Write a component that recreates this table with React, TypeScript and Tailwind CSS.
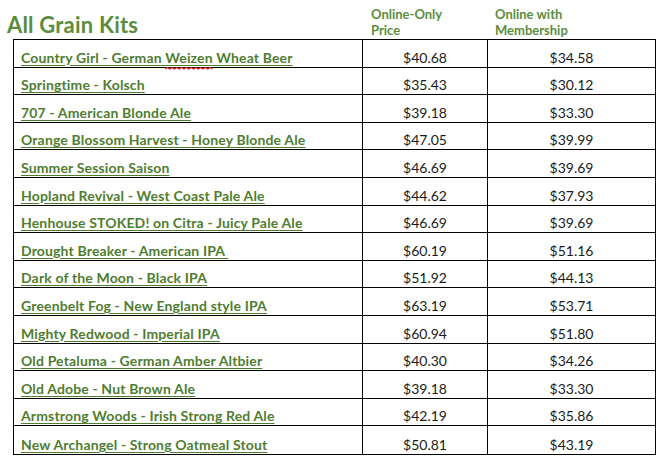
import React from "react";

const rows: [string, string, string][] = [
  ["Country Girl - German Weizen Wheat Beer", "$40.68", "$34.58"],
  ["Springtime - Kolsch", "$35.43", "$30.12"],
  ["707 - American Blonde Ale", "$39.18", "$33.30"],
  ["Orange Blossom Harvest - Honey Blonde Ale", "$47.05", "$39.99"],
  ["Summer Session Saison", "$46.69", "$39.69"],
  ["Hopland Revival - West Coast Pale Ale", "$44.62", "$37.93"],
  ["Henhouse STOKED! on Citra - Juicy Pale Ale", "$46.69", "$39.69"],
  ["Drought Breaker - American IPA\u00a0", "$60.19", "$51.16"],
  ["Dark of the Moon - Black IPA", "$51.92", "$44.13"],
  ["Greenbelt Fog - New England style IPA", "$63.19", "$53.71"],
  ["Mighty Redwood - Imperial IPA", "$60.94", "$51.80"],
  ["Old Petaluma - German Amber Altbier", "$40.30", "$34.26"],
  ["Old Adobe - Nut Brown Ale", "$39.18", "$33.30"],
  ["Armstrong Woods - Irish Strong Red Ale", "$42.19", "$35.86"],
  ["New Archangel - Strong Oatmeal Stout", "$50.81", "$43.19"],
];

function Name({ text }: { text: string }) {
  if (text.startsWith("Country Girl")) {
    return (
      <span className="underline decoration-[#4f7d30] underline-offset-2">
        Country Girl - German{" "}
        <span className="relative">
          Weizen
          <svg className="absolute left-0 -bottom-[4px]" width="100%" height="3" preserveAspectRatio="none" viewBox="0 0 40 3">
            <path d="M0 2 L2 0.5 L4 2 L6 0.5 L8 2 L10 0.5 L12 2 L14 0.5 L16 2 L18 0.5 L20 2 L22 0.5 L24 2 L26 0.5 L28 2 L30 0.5 L32 2 L34 0.5 L36 2 L38 0.5 L40 2" stroke="#e02020" strokeWidth="1" fill="none" />
          </svg>
        </span>{" "}
        Wheat Beer
      </span>
    );
  }
  return <span className="underline decoration-[#4f7d30] underline-offset-2 whitespace-pre">{text}</span>;
}

export default function App() {
  return (
    <div className="w-[662px] h-[464px] bg-white overflow-hidden" style={{ fontFamily: "Lato, 'Open Sans', sans-serif" }}>
      <div className="flex h-[39px]">
        <div className="w-[362px] pl-[7px] pt-[12px] text-[22px] leading-[26px] font-bold text-[#5b8d3c] tracking-[0.2px]">All Grain Kits</div>
        <div className="w-[125px] pl-[9px] pt-[6px] text-[13px] leading-[16px] font-bold text-[#5b8d3c]">
          Online-Only
          <br />
          Price
        </div>
        <div className="pl-[8px] pt-[6px] text-[13px] leading-[16px] font-bold text-[#5b8d3c]">
          Online with
          <br />
          Membership
        </div>
      </div>
      <div className="ml-[13px] w-[643px] border border-black">
        {rows.map(([name, p1, p2], i) => (
          <div
            key={i}
            className={`grid grid-cols-[348px_125px_1fr] h-[27.6px] ${i < rows.length - 1 ? "border-b border-black" : ""}`}
          >
            <div className="pl-[7px] flex items-end pb-[1px] text-[14px] leading-[16px] font-bold text-[#4f7d30] tracking-[0.15px]">
              <Name text={name} />
            </div>
            <div className="border-l border-black flex items-end justify-center pb-[1px] text-[14px] leading-[16px] text-[#1a1a1a]">
              {p1}
            </div>
            <div className="border-l border-black flex items-end justify-center pb-[1px] text-[14px] leading-[16px] text-[#1a1a1a]">
              {p2}
            </div>
          </div>
        ))}
      </div>
    </div>
  );
}
